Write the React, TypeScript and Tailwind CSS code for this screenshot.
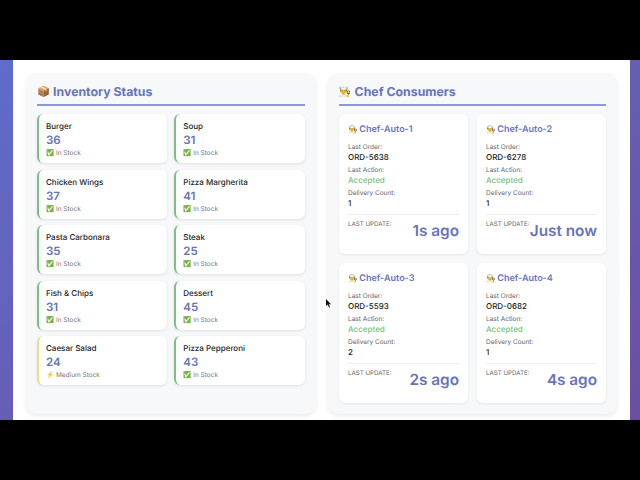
const inventory = [
  { name: "Burger", qty: 36 },
  { name: "Soup", qty: 31 },
  { name: "Chicken Wings", qty: 37 },
  { name: "Pizza Margherita", qty: 41 },
  { name: "Pasta Carbonara", qty: 35 },
  { name: "Steak", qty: 25 },
  { name: "Fish & Chips", qty: 31 },
  { name: "Dessert", qty: 45 },
  { name: "Caesar Salad", qty: 24, medium: true },
  { name: "Pizza Pepperoni", qty: 43 },
];

const chefs = [
  { name: "Chef-Auto-1", order: "ORD-5638", count: 1, update: "1s ago" },
  { name: "Chef-Auto-2", order: "ORD-6278", count: 1, update: "Just now" },
  { name: "Chef-Auto-3", order: "ORD-5593", count: 2, update: "2s ago" },
  { name: "Chef-Auto-4", order: "ORD-0682", count: 1, update: "4s ago" },
];

function InventoryCard({ name, qty, medium }: { name: string; qty: number; medium?: boolean }) {
  return (
    <div
      className={`h-[49px] rounded-[6px] border-l-2 bg-white pl-[7px] pt-[6px] shadow-[0_1px_3px_rgba(0,0,0,0.1)] ${
        medium ? "border-[#f0dc82]" : "border-[#7cc083]"
      }`}
    >
      <div className="text-[8px] leading-[12px] font-medium text-[#222]">{name}</div>
      <div className="mt-[1px] text-[11.5px] leading-[15px] font-semibold text-[#6674bd]">{qty}</div>
      <div className="text-[6.5px] leading-[10px] text-[#777]">
        {medium ? "⚡ Medium Stock" : "✅ In Stock"}
      </div>
    </div>
  );
}

function Label({ children }: { children: React.ReactNode }) {
  return <div className="mt-[3px] text-[6.5px] leading-[8px] text-[#666]">{children}</div>;
}

function ChefCard({ name, order, count, update }: { name: string; order: string; count: number; update: string }) {
  return (
    <div className="h-[140px] rounded-[6px] bg-white pt-[9px] pr-[9px] pl-[9.5px] shadow-[0_1px_3px_rgba(0,0,0,0.08)]">
      <div className="flex items-center gap-[2px] text-[9px] leading-[14px] font-semibold text-[#6674bd]">
        <span className="text-[7.5px]">👨‍🍳</span>
        {name}
      </div>
      <div className="mt-[6px]">
        <Label>Last Order:</Label>
      </div>
      <div className="text-[8px] leading-[12px] font-medium text-[#222]">{order}</div>
      <Label>Last Action:</Label>
      <div className="text-[8px] leading-[12px] font-medium text-[#74c27c]">Accepted</div>
      <Label>Delivery Count:</Label>
      <div className="text-[8px] leading-[12px] font-medium text-[#222]">{count}</div>
      <div className="mt-[5px] flex items-start justify-between border-t border-[#eeeeee] pt-[5px]">
        <span className="text-[6.2px] leading-[10px] whitespace-nowrap text-[#666]">LAST UPDATE:</span>
        <span className="mt-[1px] text-[15.3px] leading-[20px] font-semibold whitespace-nowrap text-[#6674bd]">
          {update}
        </span>
      </div>
    </div>
  );
}

function Panel({ icon, title, children }: { icon: string; title: string; children: React.ReactNode }) {
  return (
    <section className="h-[341px] flex-1 rounded-[10px] bg-[#f7f8fa] px-[11px] pt-[10px] shadow-[0_2px_4px_rgba(0,0,0,0.08)]">
      <h2 className="flex h-[23px] items-start gap-[3px] border-b-2 border-[#8f98d6] text-[12.3px] leading-[18px] font-bold text-[#6674bd]">
        <span className="text-[10.5px]">{icon}</span>
        {title}
      </h2>
      {children}
    </section>
  );
}

export default function App() {
  return (
    <div className="relative flex h-[480px] w-[640px] flex-col bg-black font-['Inter','Noto_Color_Emoji',sans-serif] [text-rendering:geometricPrecision]">
      <div className="mt-[60px] flex h-[360px] bg-gradient-to-br from-[#5f6cc9] to-[#6a4fa3] pr-[10px] pl-[13px]">
        <main className="flex flex-1 gap-[12px] bg-white px-[13px] pt-[13px]">
          <Panel icon="📦" title="Inventory Status">
            <div className="mt-[8px] grid grid-cols-2 gap-x-[7px] gap-y-[6.5px]">
              {inventory.map((item) => (
                <InventoryCard key={item.name} {...item} />
              ))}
            </div>
          </Panel>
          <Panel icon="👨‍🍳" title="Chef Consumers">
            <div className="mt-[8px] grid grid-cols-2 gap-x-[8.5px] gap-y-[9px]">
              {chefs.map((chef) => (
                <ChefCard key={chef.name} {...chef} />
              ))}
            </div>
          </Panel>
        </main>
      </div>
      {/* mouse cursor caught in the capture */}
      <svg className="absolute top-[299px] left-[326px] h-[9px] w-[6px]" viewBox="0 0 6 9">
        <path d="M0 0 L0 7 L1.7 5.6 L3 8.6 L4 8.2 L2.8 5.2 L5 5.2 Z" fill="#111" />
      </svg>
    </div>
  );
}
